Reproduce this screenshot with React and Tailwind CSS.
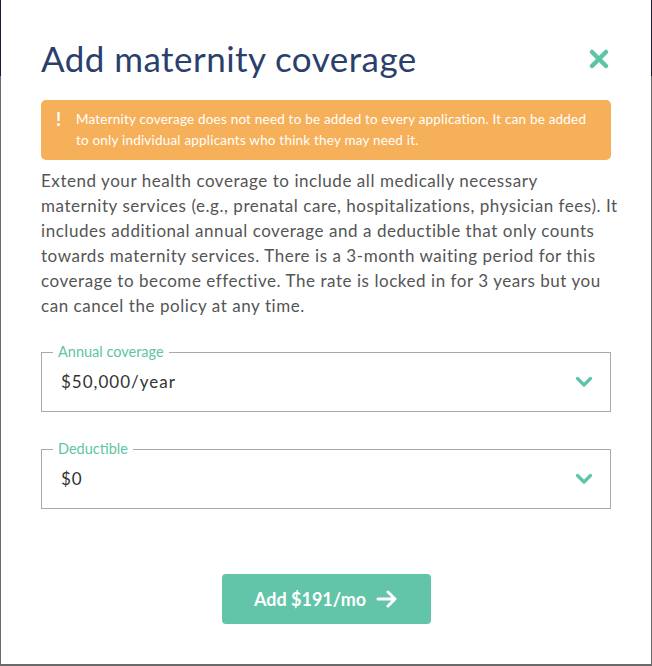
import React from "react";

function Chevron() {
  return (
    <svg width="18" height="12" viewBox="0 0 18 12" fill="none">
      <path d="M2.5 2.5 L9 9 L15.5 2.5" stroke="#5ec4a8" strokeWidth="3.2" strokeLinecap="round" strokeLinejoin="round" />
    </svg>
  );
}

function Field({ label, value }) {
  return (
    <div className="relative border border-[#a9a9a9] h-[60px] pl-[19px] pr-[17px] flex items-center justify-between">
      <span className="absolute left-[11px] top-[-10px] bg-white px-[5px] text-[14.5px] leading-[18px] text-[#5ec4a8]">{label}</span>
      <span className="text-[17px] tracking-[1px] text-[#333]">{value}</span>
      <Chevron />
    </div>
  );
}

export default function App() {
  return (
    <div className="w-[652px] h-[666px] bg-[linear-gradient(to_bottom,#1c1a3c_76px,#6a6a6a_76px)] px-[1px] pb-[2px]" style={{ fontFamily: "Lato, 'Open Sans', sans-serif" }}>
      <div className="bg-white w-full h-full px-[40px] pt-[36px]">
        <div className="flex items-center justify-between">
          <h1 className="text-[35px] leading-[44px] text-[#2b3f6c] font-normal tracking-[0.45px] whitespace-nowrap">Add maternity coverage</h1>
          <svg width="22" height="22" viewBox="0 0 22 22" className="mr-[1px] mt-[2px]">
            <path d="M4 4 L18 18 M18 4 L4 18" stroke="#5ec4a8" strokeWidth="4.5" strokeLinecap="round" />
          </svg>
        </div>
        <div className="mt-[20px] bg-[#f6b05a] rounded-[5px] flex pl-[15px] pr-[10px] py-[9px] text-white text-[13.5px] tracking-[0.2px] leading-[21px]">
          <span className="w-[20px] font-bold text-[18px] leading-[21px]">!</span>
          <p className="whitespace-nowrap">
            Maternity coverage does not need to be added to every application. It can be added
            <br />
            to only individual applicants who think they may need it.
          </p>
        </div>
        <p className="mt-[8px] text-[17px] tracking-[0.55px] leading-[25px] text-[#555] whitespace-nowrap">
          Extend your health coverage to include all medically necessary
          <br />
          maternity services (e.g., prenatal care, hospitalizations, physician fees). It
          <br />
          includes additional annual coverage and a deductible that only counts
          <br />
          towards maternity services. There is a 3-month waiting period for this
          <br />
          coverage to become effective. The rate is locked in for 3 years but you
          <br />
          can cancel the policy at any time.
        </p>
        <div className="mt-[34px] flex flex-col gap-[37px]">
          <Field label="Annual coverage" value="$50,000/year" />
          <Field label="Deductible" value="$0" />
        </div>
        <div className="flex justify-center mt-[65px]">
          <button className="w-[209px] h-[50px] bg-[#62c4a9] rounded-[4px] text-white text-[18px] font-bold flex items-center justify-center gap-[10px]">
            Add $191/mo
            <svg width="22" height="18" viewBox="0 0 22 18" fill="none">
              <path d="M2 9 H19 M12 2 L19 9 L12 16" stroke="white" strokeWidth="3" strokeLinecap="round" strokeLinejoin="round" />
            </svg>
          </button>
        </div>
      </div>
    </div>
  );
}
